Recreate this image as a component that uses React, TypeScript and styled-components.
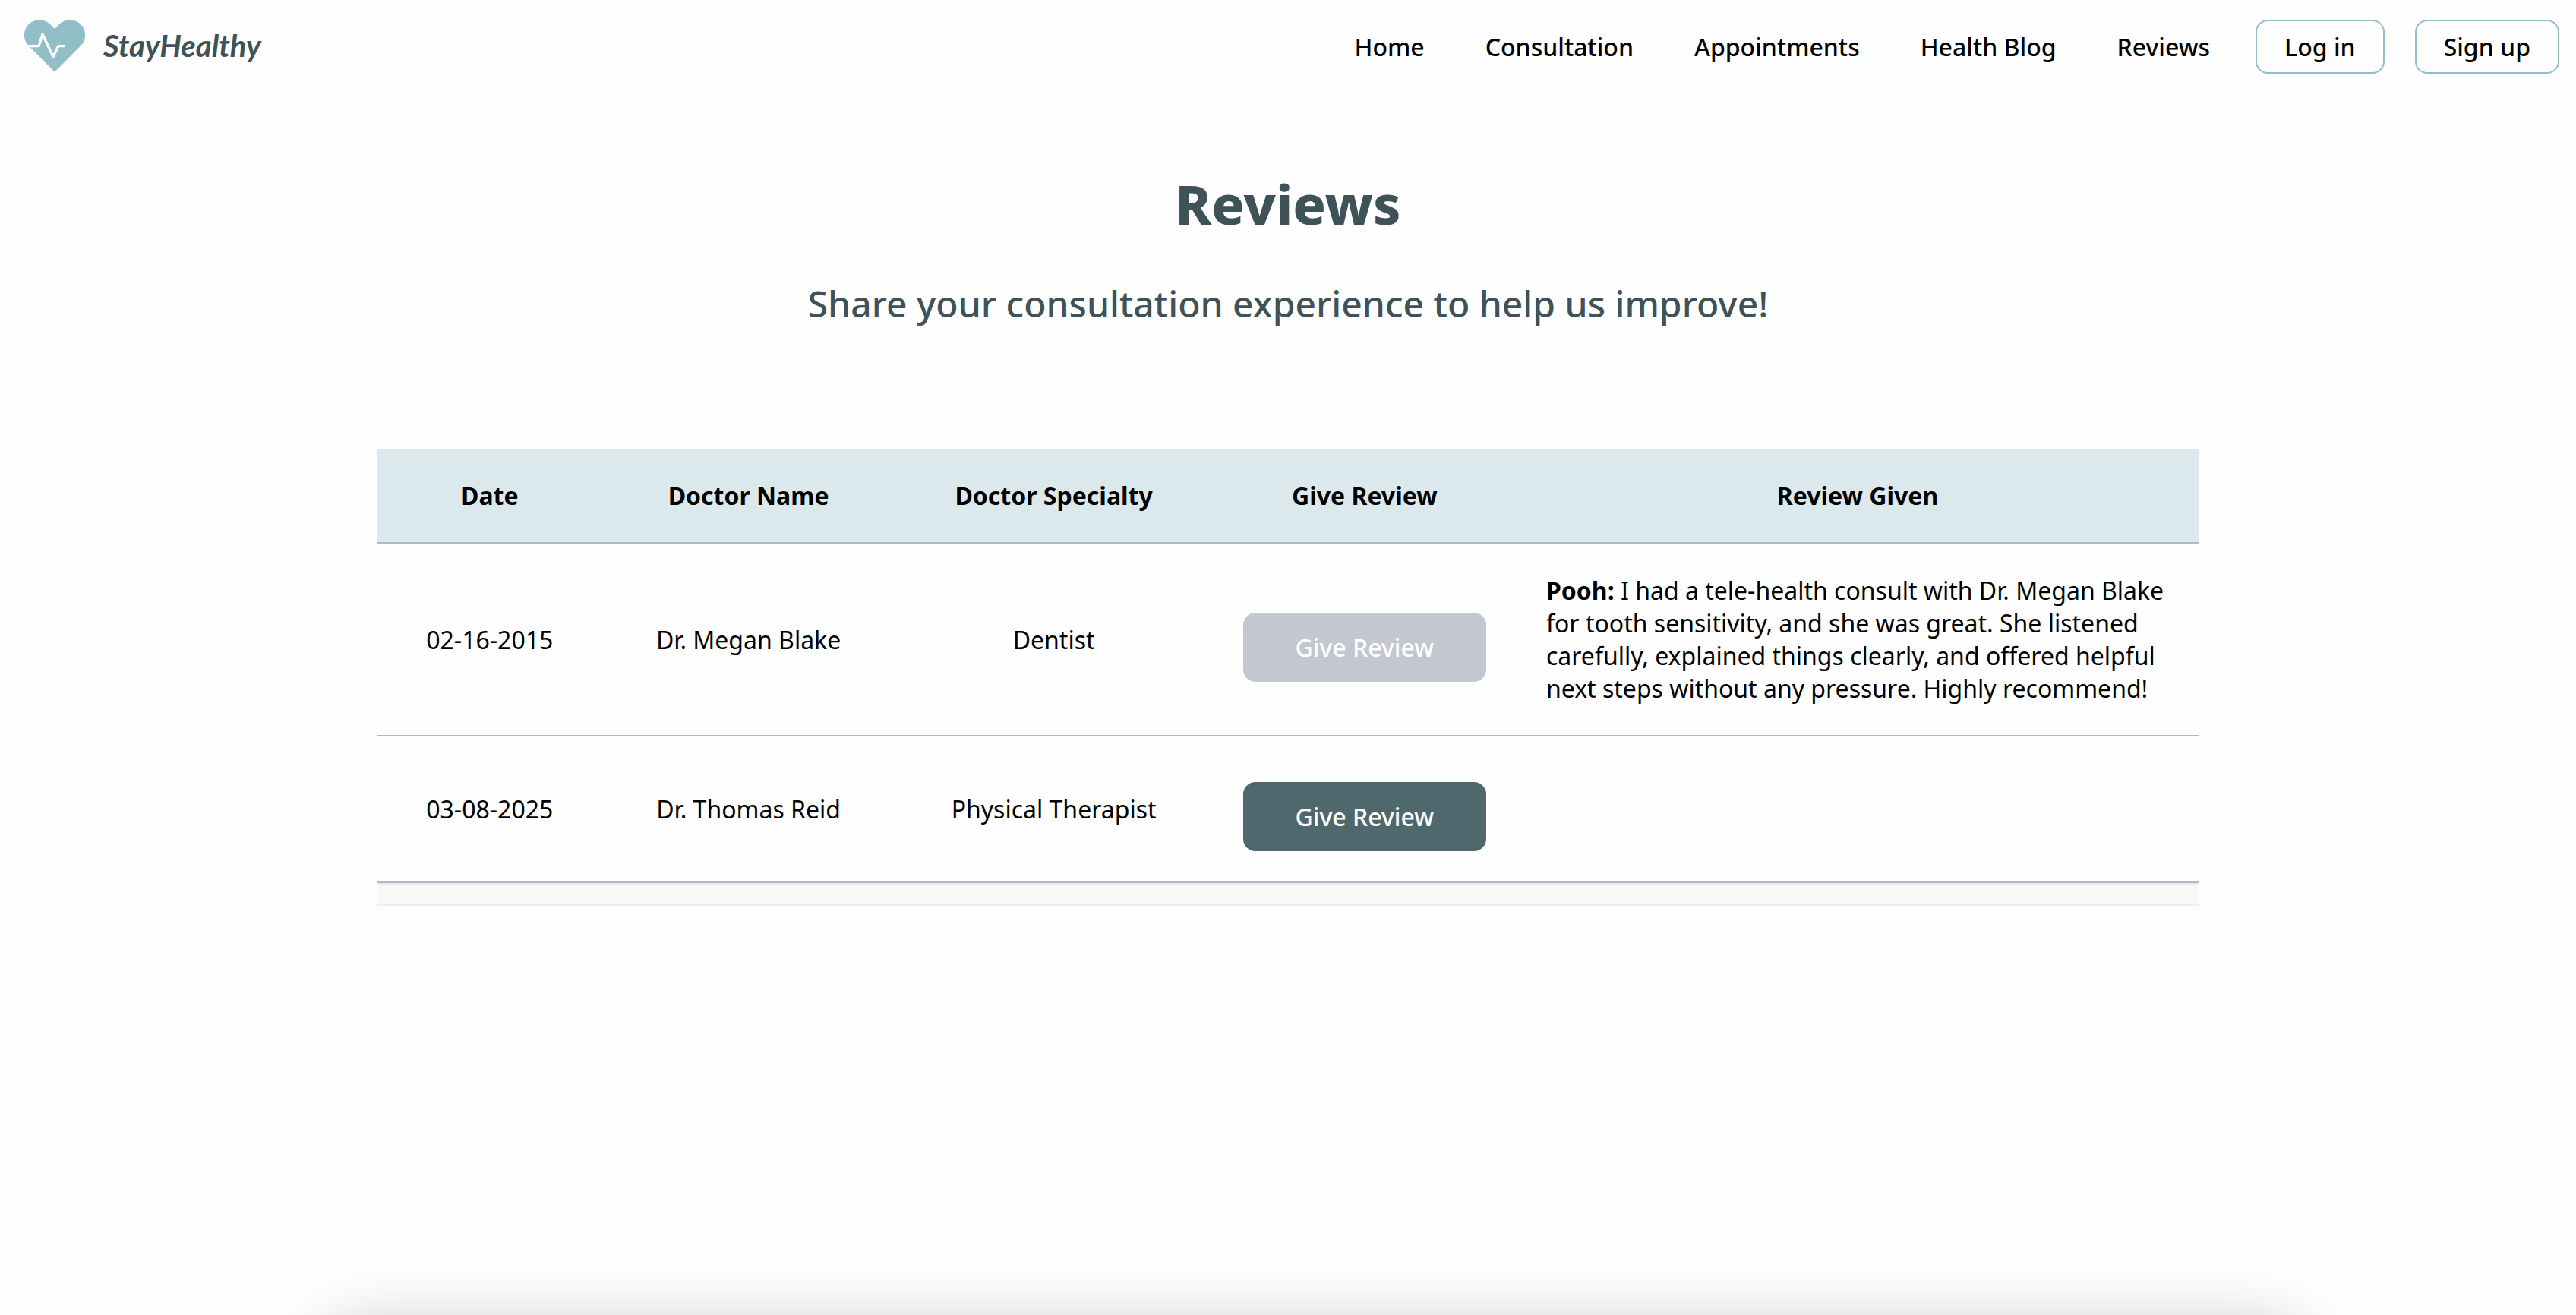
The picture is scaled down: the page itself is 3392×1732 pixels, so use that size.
import React from "react";
import styled, { createGlobalStyle } from "styled-components";

const GlobalStyle = createGlobalStyle`
  *, *::before, *::after { box-sizing: border-box; }
  body {
    margin: 0;
    background: #fefefe;
    color: #000;
    font-family: "Noto Sans", "Open Sans", sans-serif;
    font-size: 32px;
    line-height: 43px;
  }
`;

const Header = styled.header`
  display: flex;
  align-items: flex-start;
  justify-content: space-between;
  padding: 26px 22px 26px 32px;
`;

const Brand = styled.a`
  display: flex;
  align-items: center;
  gap: 24px;
  color: #3f5257;
  font-family: Lato, sans-serif;
  font-size: 40px;
  font-style: italic;
  font-weight: 700;
  text-decoration: none;
`;

const HeartIcon = styled.svg`
  display: block;
  width: 80px;
  height: 68px;
`;

const Nav = styled.nav`
  display: flex;
  align-items: center;
  gap: 60px;
`;

const NavLinks = styled.div`
  display: flex;
  gap: 80px;
`;

const NavLink = styled.a`
  color: #000;
  font-weight: 500;
  text-decoration: none;
`;

const Actions = styled.div`
  display: flex;
  gap: 40px;
`;

const OutlineButton = styled.button`
  padding: 12px 36px;
  border: 2px solid #92bec7;
  border-radius: 16px;
  background: transparent;
  color: #000;
  font: inherit;
  font-weight: 500;
  cursor: pointer;
`;

const Main = styled.main`
  display: flex;
  flex-direction: column;
  align-items: center;
  padding: 96px 40px;
`;

const Title = styled.h1`
  margin: 0 0 50px;
  color: #3f5257;
  font-size: 72px;
  font-weight: 800;
  line-height: 98px;
`;

const Subtitle = styled.h2`
  margin: 0 0 158px;
  color: #3f5257;
  font-size: 48px;
  font-weight: 500;
  line-height: 66px;
`;

const TableWrap = styled.div`
  width: 100%;
  max-width: 2400px;
`;

const Table = styled.table`
  width: 100%;
  table-layout: fixed;
  border-collapse: separate;
  border-spacing: 0;
`;

const Col = styled.col<{ $share?: string }>`
  width: ${({ $share }) => $share ?? "auto"};
`;

const HeadCell = styled.th`
  padding: 40px;
  border-bottom: 2px solid #b3b8c5;
  background: #dce9ec;
  font-weight: 700;
  text-align: center;
`;

const Cell = styled.td<{ $align?: "left" | "center"; $flush?: boolean }>`
  padding: ${({ $flush }) => ($flush ? "40px 0" : "40px")};
  border-bottom: 2px solid #b3b8c5;
  text-align: ${({ $align }) => $align ?? "center"};
  vertical-align: middle;
`;

const ReviewButton = styled.button`
  display: block;
  width: 320px;
  margin: 20px auto 0;
  padding: 24px;
  border: 0;
  border-radius: 16px;
  background: #4f686d;
  color: #fff;
  font: inherit;
  font-weight: 500;
  cursor: pointer;

  &:disabled {
    background: #c3c7d0;
    cursor: default;
  }
`;

const TableEnd = styled.div`
  height: 30px;
  border-top: 2px solid #e9e9ed;
  border-bottom: 2px solid #eee;
  background: #f9f9f9;
`;

const BottomSheet = styled.div`
  position: fixed;
  top: calc(100% + 28px);
  right: 11%;
  left: 13%;
  height: 400px;
  box-shadow: 0 0 88px rgba(0, 0, 0, 0.3);
`;

const links = ["Home", "Consultation", "Appointments", "Health Blog", "Reviews"];

interface Consultation {
  date: string;
  doctor: string;
  specialty: string;
  review?: { name: string; text: string };
}

const consultations: Consultation[] = [
  {
    date: "02-16-2015",
    doctor: "Dr. Megan Blake",
    specialty: "Dentist",
    review: {
      name: "Pooh",
      text: "I had a tele-health consult with Dr. Megan Blake for tooth sensitivity, and she was great. She listened carefully, explained things clearly, and offered helpful next steps without any pressure. Highly recommend!",
    },
  },
  { date: "03-08-2025", doctor: "Dr. Thomas Reid", specialty: "Physical Therapist" },
];

function Heart() {
  return (
    <HeartIcon viewBox="96 76 240 204" aria-hidden="true">
      <path
        fill="#92bec7"
        d="M216 112L198 94A60 60 0 0 0 113 179L207 273Q216 283 225 273L319 179A60 60 0 0 0 234 94Z"
      />
      <path
        fill="none"
        stroke="#fefefe"
        strokeWidth="10"
        strokeLinejoin="round"
        d="M106 180H153L168 133L210 222L230 180H258"
      />
    </HeartIcon>
  );
}

export default function App() {
  return (
    <>
      <GlobalStyle />
      <Header>
        <Brand href="#home">
          <Heart />
          StayHealthy
        </Brand>
        <Nav>
          <NavLinks>
            {links.map((label) => (
              <NavLink key={label} href={`#${label.toLowerCase().replace(" ", "-")}`}>
                {label}
              </NavLink>
            ))}
          </NavLinks>
          <Actions>
            <OutlineButton type="button">Log in</OutlineButton>
            <OutlineButton type="button">Sign up</OutlineButton>
          </Actions>
        </Nav>
      </Header>
      <Main>
        <Title>Reviews</Title>
        <Subtitle>Share your consultation experience to help us improve!</Subtitle>
        <TableWrap>
          <Table>
            <colgroup>
              <Col $share="12.4%" />
              <Col $share="16%" />
              <Col $share="17.5%" />
              <Col $share="16.6%" />
              <Col />
            </colgroup>
            <thead>
              <tr>
                <HeadCell scope="col">Date</HeadCell>
                <HeadCell scope="col">Doctor Name</HeadCell>
                <HeadCell scope="col">Doctor Specialty</HeadCell>
                <HeadCell scope="col">Give Review</HeadCell>
                <HeadCell scope="col">Review Given</HeadCell>
              </tr>
            </thead>
            <tbody>
              {consultations.map(({ date, doctor, specialty, review }) => (
                <tr key={date}>
                  <Cell>{date}</Cell>
                  <Cell>{doctor}</Cell>
                  <Cell>{specialty}</Cell>
                  <Cell $flush>
                    <ReviewButton type="button" disabled={Boolean(review)}>
                      Give Review
                    </ReviewButton>
                  </Cell>
                  <Cell $align="left">
                    {review && (
                      <>
                        <strong>{review.name}:</strong> {review.text}
                      </>
                    )}
                  </Cell>
                </tr>
              ))}
            </tbody>
          </Table>
          <TableEnd />
        </TableWrap>
      </Main>
      <BottomSheet />
    </>
  );
}
